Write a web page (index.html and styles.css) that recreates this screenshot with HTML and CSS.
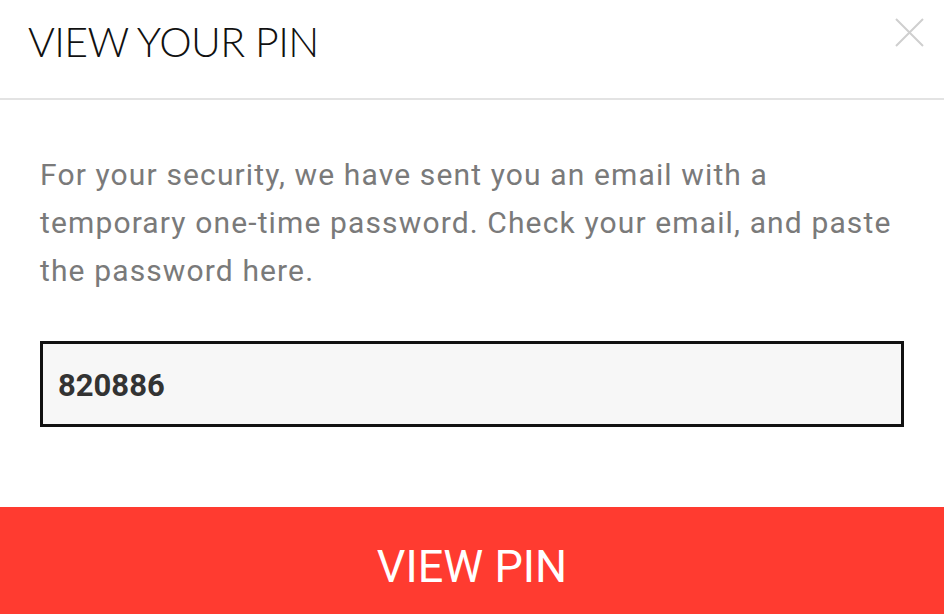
FILE: index.html
```html
<!DOCTYPE html>
<html>
<head>
<meta charset="utf-8">
<link rel="stylesheet" href="styles.css">
</head>
<body>
<div class="dialog">
  <header class="head">
    <h1 class="title">VIEW YOUR PIN</h1>
    <button class="close" aria-label="Close">
      <svg width="30" height="30" viewBox="0 0 30 30"><path d="M2 1 L29 28 M29 1 L2 28" stroke="#cfcfcf" stroke-width="2" fill="none"/></svg>
    </button>
  </header>
  <main class="content">
    <p class="msg">For your security, we have sent you an email with a temporary one-time password. Check your email, and paste the password here.</p>
    <div class="field">820886</div>
  </main>
  <button class="submit">VIEW PIN</button>
</div>
</body>
</html>
```
FILE: styles.css
```css
html, body { margin: 0; padding: 0; background: #fff; }
body { width: 944px; height: 614px; overflow: hidden; font-family: Roboto, "Liberation Sans", sans-serif; }
.dialog { display: flex; flex-direction: column; height: 614px; }
.head { height: 98px; border-bottom: 2px solid #e3e3e3; display: flex; align-items: flex-start; justify-content: space-between; }
.title { margin: 0; padding: 20px 0 0 28px; font-family: Lato, "Liberation Sans", sans-serif; font-weight: 300; font-size: 41px; line-height: 44px; color: #111; letter-spacing: -0.6px; }
.close { border: 0; background: none; padding: 0; margin: 18px 20px 0 0; width: 30px; height: 30px; }
.close svg { display: block; }
.content { flex: 1; padding: 0 40px; }
.msg { margin: 51px 0 0 0; font-size: 30px; line-height: 48px; color: #7a7a7a; letter-spacing: 1.13px; }
.field { margin-top: 46px; height: 78px; border: 3px solid #111; background: #f7f7f7; display: flex; align-items: center; padding: 2px 0 0 15px; font-weight: 700; font-size: 31px; color: #333; }
.submit { height: 107px; border: 0; background: #ff3b30; color: #fff; font-family: Roboto, "Liberation Sans", sans-serif; font-size: 45px; font-weight: 400; padding: 11px 0 0 0; width: 100%; }
```
